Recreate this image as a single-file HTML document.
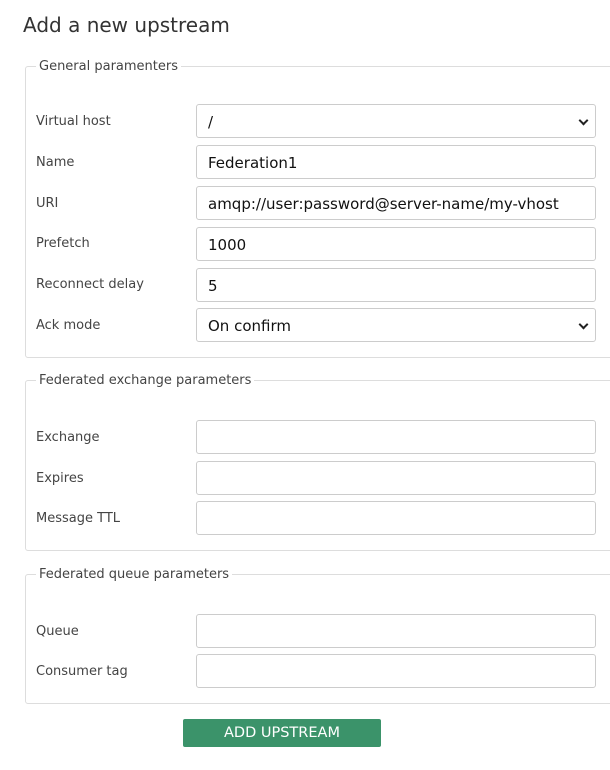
<!DOCTYPE html>
<html><head><style>
body{margin:0;width:610px;height:770px;background:#fff;font-family:"DejaVu Sans","Liberation Sans",sans-serif;color:#333;position:relative;overflow:hidden}
h1{position:absolute;left:23px;top:13px;margin:0;font-size:20px;font-weight:normal;color:#333}
.fs{position:absolute;left:25px;width:600px;border:1px solid #ddd;border-radius:3px}
.lg{position:absolute;left:10px;top:-8px;background:#fff;padding:0 3px;font-size:13px;color:#444}
.lb{position:absolute;left:36px;font-size:13px;color:#444;margin-top:2px}
.in{position:absolute;left:196px;border:1px solid #ccc;border-radius:3px;font-size:15px;color:#111;line-height:34px;padding-left:11px;box-sizing:border-box;width:400px;height:34px}
.sel::after{content:"";position:absolute;right:8px;top:12px;width:5px;height:5px;border-right:2px solid #222;border-bottom:2px solid #222;transform:rotate(45deg)}
.btn{position:absolute;left:183px;top:719px;width:198px;height:28px;background:#3b936a;border-radius:2px;color:#fff;font-size:14.5px;text-align:center;line-height:29px}
</style></head><body>
<h1>Add a new upstream</h1>
<div class="fs" style="top:66px;height:290px"><span class="lg">General paramenters</span></div>
<div class="fs" style="top:380px;height:169px"><span class="lg">Federated exchange parameters</span></div>
<div class="fs" style="top:574px;height:128px"><span class="lg">Federated queue parameters</span></div>

<div class="lb" style="top:112px">Virtual host</div><div class="in sel" style="top:104px">/</div>
<div class="lb" style="top:153px">Name</div><div class="in" style="top:145px">Federation1</div>
<div class="lb" style="top:194px">URI</div><div class="in" style="top:186px">amqp://user:password@server-name/my-vhost</div>
<div class="lb" style="top:234px">Prefetch</div><div class="in" style="top:227px">1000</div>
<div class="lb" style="top:275px">Reconnect delay</div><div class="in" style="top:268px">5</div>
<div class="lb" style="top:316px">Ack mode</div><div class="in sel" style="top:308px">On confirm</div>

<div class="lb" style="top:428px">Exchange</div><div class="in" style="top:420px"></div>
<div class="lb" style="top:469px">Expires</div><div class="in" style="top:461px"></div>
<div class="lb" style="top:509px">Message TTL</div><div class="in" style="top:501px"></div>

<div class="lb" style="top:622px">Queue</div><div class="in" style="top:614px"></div>
<div class="lb" style="top:662px">Consumer tag</div><div class="in" style="top:654px"></div>

<div class="btn">ADD UPSTREAM</div>
</body></html>
